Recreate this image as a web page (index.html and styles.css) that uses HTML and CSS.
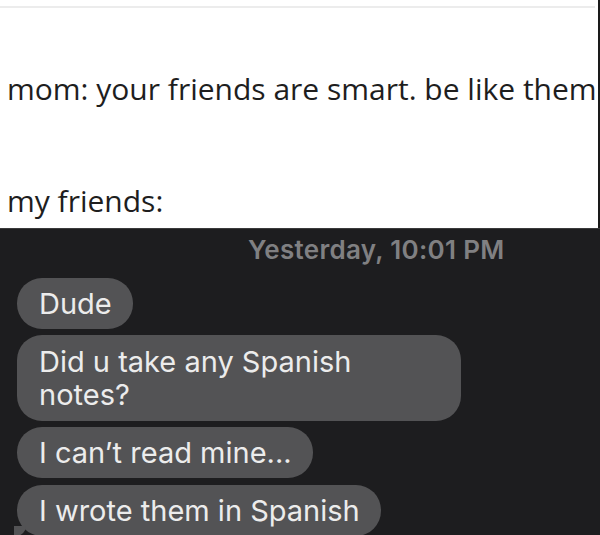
FILE: index.html
```html
<!DOCTYPE html>
<html>
<head>
<meta charset="utf-8">
<link rel="stylesheet" href="styles.css">
</head>
<body>
<div class="meme">
  <div class="top">
    <div class="rule"></div>
    <p class="caption caption-mom">mom: your friends are smart. be like them</p>
    <p class="caption caption-friends">my friends:</p>
  </div>
  <div class="chat">
    <div class="stamp">Yesterday, 10:01 PM</div>
    <div class="bubbles">
      <div class="bubble">Dude</div>
      <div class="bubble bubble-wide">Did u take any Spanish<br>notes?</div>
      <div class="bubble">I can’t read mine...</div>
      <div class="bubble bubble-last">I wrote them in Spanish</div>
    </div>
  </div>
</div>
</body>
</html>
```

FILE: styles.css
```css
html, body {
  margin: 0;
  padding: 0;
  background: #1d1d1f;
}
.meme {
  width: 600px;
  height: 535px;
  overflow: hidden;
  display: flex;
  flex-direction: column;
}
.top {
  height: 228px;
  flex-shrink: 0;
  background: #ffffff;
  border-right: 2px solid #1a1a1a;
  box-sizing: border-box;
  display: flex;
  flex-direction: column;
}
.rule {
  margin-top: 6px;
  height: 2px;
  width: 595px;
  background: #ececec;
}
.caption {
  margin: 0;
  font-family: "Open Sans", "Noto Sans", sans-serif;
  font-size: 30px;
  line-height: 40px;
  color: #1e1e1e;
  padding-left: 7px;
  white-space: nowrap;
}
.caption-mom {
  margin-top: 61px;
}
.caption-friends {
  margin-top: 72px;
}
.chat {
  flex: 1;
  background: #1d1d1f;
  border-top: 1px solid #3a3a3c;
  display: flex;
  flex-direction: column;
}
.stamp {
  font-family: "Inter", "Liberation Sans", sans-serif;
  font-weight: 600;
  font-size: 26px;
  letter-spacing: 0.3px;
  color: #808082;
  padding-left: 248px;
  margin-top: 5px;
  line-height: 32px;
}
.bubbles {
  display: flex;
  flex-direction: column;
  align-items: flex-start;
  gap: 6px;
  padding-left: 17px;
  margin-top: 12px;
}
.bubble {
  position: relative;
  background: #535355;
  color: #ececec;
  font-family: "Inter", "Liberation Sans", sans-serif;
  font-size: 29px;
  line-height: 35px;
  padding: 8px 21px 8px 22px;
  border-radius: 25px;
  white-space: nowrap;
}
.bubble-wide {
  width: 401px;
  line-height: 33px;
  padding-top: 10px;
  padding-bottom: 10px;
}
.bubble-last {
  margin-top: 1px;
}
.bubble-last::after {
  content: "";
  position: absolute;
  left: -3px;
  bottom: 0;
  width: 12px;
  height: 10px;
  background: #535355;
  border-bottom-right-radius: 10px;
}
```
